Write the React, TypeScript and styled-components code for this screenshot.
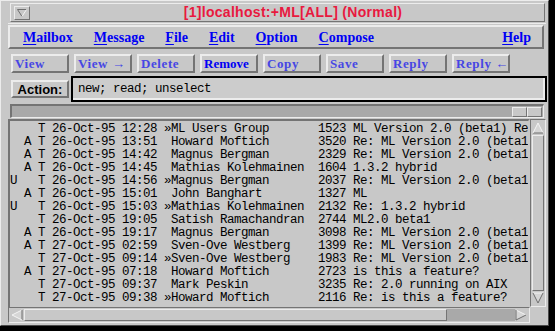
import React from "react";
import styled, { createGlobalStyle, css } from "styled-components";

const C = {
  bg: "#c8c8c8",
  light: "#ececec",
  dark: "#747474",
  trough: "#a9a9a9",
  blue: "#0000f4",
  stipple: "#4646e4",
  red: "#e8193f",
};

const GlobalStyle = createGlobalStyle`
  html, body {
    margin: 0;
    padding: 0;
    background: #000;
  }
`;

const raised = css`
  border-top: 2px solid ${C.light};
  border-left: 2px solid ${C.light};
  border-bottom: 2px solid ${C.dark};
  border-right: 2px solid ${C.dark};
`;

const sunken = css`
  border-top: 1px solid ${C.dark};
  border-left: 1px solid ${C.dark};
  border-bottom: 1px solid ${C.light};
  border-right: 1px solid ${C.light};
`;

const Screen = styled.div`
  width: 555px;
  height: 331px;
  background: #000;
  overflow: hidden;
`;

const Frame = styled.div`
  box-sizing: border-box;
  width: 549px;
  height: 326px;
  background: ${C.bg};
  border-top: 1px solid ${C.light};
  border-left: 1px solid ${C.light};
  border-right: 1px solid #4a4a4a;
  border-bottom: 1px solid #4a4a4a;
  padding: 2px 2px 2px 7px;
  display: flex;
  flex-direction: column;
`;

const TitleBar = styled.div`
  box-sizing: border-box;
  height: 19px;
  margin: 0 1px 0 2px;
  padding-left: 3px;
  display: flex;
  align-items: center;
  border-top: 1px solid ${C.light};
  border-left: 1px solid ${C.light};
  border-bottom: 1px solid ${C.dark};
  border-right: 1px solid ${C.dark};
`;

const WindowMenuButton = styled.div`
  box-sizing: border-box;
  width: 16px;
  height: 14px;
  display: flex;
  align-items: center;
  justify-content: center;
  border-top: 1px solid ${C.light};
  border-left: 1px solid ${C.light};
  border-bottom: 1px solid ${C.dark};
  border-right: 1px solid ${C.dark};
`;

const TitleText = styled.div`
  flex: 1;
  text-align: center;
  padding-left: 12px;
  font-family: "Liberation Sans", Arial, sans-serif;
  font-weight: bold;
  font-size: 14px;
  letter-spacing: 0.3px;
  line-height: 17px;
  color: ${C.red};
  white-space: nowrap;
`;

const Client = styled.div`
  flex: 1;
  min-height: 0;
  margin-top: 1px;
  padding-top: 1px;
  border-top: 1px solid ${C.light};
  display: flex;
  flex-direction: column;
`;

const MenuBar = styled.div`
  box-sizing: border-box;
  height: 24px;
  margin-right: 2px;
  padding: 1px 0 0 13px;
  display: flex;
  align-items: center;
  gap: 21px;
  ${raised}
`;

const MenuItem = styled.span<{ $right?: boolean }>`
  font-family: "Liberation Serif", "Times New Roman", serif;
  font-weight: bold;
  font-size: 14px;
  line-height: 16px;
  color: ${C.blue};
  ${(p) => p.$right && "margin-left: auto; margin-right: 11px;"}
`;

const Mnemonic = styled.span`
  text-decoration: underline;
  text-underline-offset: 2px;
`;

const ToolBar = styled.div`
  margin-top: 5px;
  height: 19px;
  padding-left: 3px;
  display: flex;
  gap: 5px;
`;

const ToolButton = styled.div<{ $off?: boolean }>`
  box-sizing: border-box;
  width: 58px;
  height: 19px;
  padding-left: 2px;
  display: flex;
  align-items: center;
  ${raised}
  font-family: "Liberation Serif", "Times New Roman", serif;
  font-weight: bold;
  font-size: 13px;
  line-height: 15px;
  white-space: nowrap;
  color: ${(p) => (p.$off ? C.stipple : C.blue)};
  letter-spacing: ${(p) => (p.$off ? "0.6px" : "0")};
`;

const ActionRow = styled.div`
  margin-top: 3px;
  height: 26px;
  padding-left: 3px;
  display: flex;
  align-items: center;
`;

const ActionButton = styled.div`
  box-sizing: border-box;
  width: 58px;
  height: 18px;
  display: flex;
  align-items: center;
  justify-content: center;
  ${raised}
  font-family: "Liberation Sans", Arial, sans-serif;
  font-weight: bold;
  font-size: 13px;
  color: #000;
`;

const Field = styled.div`
  box-sizing: border-box;
  flex: 1;
  height: 26px;
  margin: 0 -1px 0 2px;
  padding-left: 5px;
  display: flex;
  align-items: center;
  border: 2px solid #000;
  box-shadow: inset -2px -2px 0 ${C.light};
  background: #cccccc;
`;

const Mono = css`
  font-family: "Liberation Mono", "Courier New", monospace;
  font-size: 12.5px;
  letter-spacing: -0.5px;
  color: #000;
  white-space: pre;
`;

const FieldText = styled.span`
  ${Mono}
`;

const Sash = styled.div`
  box-sizing: border-box;
  height: 14px;
  margin: 2px 2px 0 2px;
  padding-right: 1px;
  display: flex;
  align-items: center;
  justify-content: flex-end;
  background: ${C.trough};
  border-top: 2px solid ${C.dark};
  border-left: 2px solid ${C.dark};
  border-bottom: 1px solid ${C.light};
  border-right: 1px solid ${C.light};
`;

const SashKnob = styled.div`
  box-sizing: border-box;
  width: 15px;
  height: 10px;
  background: ${C.bg};
  border-top: 1px solid ${C.light};
  border-left: 1px solid ${C.light};
  border-bottom: 1px solid ${C.dark};
  border-right: 1px solid ${C.dark};
`;

const ListPane = styled.div`
  flex: 1;
  min-height: 0;
  margin-top: 1px;
  display: grid;
  grid-template-columns: 1fr 16px;
  grid-template-rows: 1fr 16px;
`;

const ListBox = styled.div`
  min-width: 0;
  overflow: hidden;
  padding-top: 2px;
  border-top: 2px solid ${C.dark};
  border-left: 2px solid ${C.dark};
  border-right: 2px solid ${C.bg};
  background: ${C.bg};
`;

const Row = styled.div`
  ${Mono}
  height: 13px;
  line-height: 13px;
`;

const VScroll = styled.div`
  box-sizing: border-box;
  display: flex;
  flex-direction: column;
  align-items: center;
  gap: 1px;
  padding: 2px 1px;
  ${sunken}
`;

const HScroll = styled.div`
  box-sizing: border-box;
  display: flex;
  align-items: center;
  padding: 1px 2px;
  ${sunken}
`;

const Slider = styled.div<{ $vertical?: boolean }>`
  box-sizing: border-box;
  background: ${C.bg};
  border-top: 1px solid ${C.light};
  border-left: 1px solid ${C.light};
  border-bottom: 1px solid ${C.dark};
  border-right: 1px solid ${C.dark};
  ${(p) => (p.$vertical ? "flex: 1; width: 12px;" : "height: 12px; margin-left: 1px;")}
`;

const HTrough = styled.div`
  flex: 1;
  height: 12px;
  background: ${C.trough};
`;

const Corner = styled.div`
  background: ${C.bg};
`;

type Dir = "up" | "down" | "left" | "right";

const Arrow = ({ dir }: { dir: Dir }) => {
  const pts: Record<Dir, [number, number][]> = {
    up: [[6, 1], [11, 11], [1, 11]],
    down: [[1, 1], [11, 1], [6, 11]],
    left: [[1, 6], [11, 1], [11, 11]],
    right: [[1, 1], [11, 6], [1, 11]],
  };
  const p = pts[dir];
  const lightEdges = dir === "down" || dir === "right" ? [0] : [0, 2];
  return (
    <svg width="12" height="12" viewBox="0 0 12 12" style={{ flex: "none" }}>
      <polygon points={p.map((q) => q.join(",")).join(" ")} fill="#d6d6d6" />
      {p.map((a, i) => {
        const b = p[(i + 1) % 3];
        return (
          <line
            key={i}
            x1={a[0]}
            y1={a[1]}
            x2={b[0]}
            y2={b[1]}
            stroke={lightEdges.includes(i) ? "#f4f4f4" : "#6e6e6e"}
            strokeWidth="1"
          />
        );
      })}
    </svg>
  );
};

const MenuGlyph = () => (
  <svg width="10" height="9" viewBox="0 0 10 9">
    <polyline points="0.5,1.5 9.5,1.5" stroke="#6e6e6e" fill="none" />
    <polyline points="0.5,1.5 5,8.5" stroke="#6e6e6e" fill="none" />
    <polyline points="9.5,1.5 5,8.5" stroke="#f4f4f4" fill="none" />
  </svg>
);

type Msg = [string, string, string, string, boolean, string, string, string];

const messages: Msg[] = [
  ["", "", "26-Oct-95", "12:28", true, "ML Users Group", "1523", "ML Version 2.0 (beta1) Re"],
  ["", "A", "26-Oct-95", "13:51", false, "Howard Moftich", "3520", "Re: ML Version 2.0 (beta1"],
  ["", "A", "26-Oct-95", "14:42", false, "Magnus Bergman", "2329", "Re: ML Version 2.0 (beta1"],
  ["", "A", "26-Oct-95", "14:45", false, "Mathias Kolehmainen", "1604", "1.3.2 hybrid"],
  ["U", "", "26-Oct-95", "14:56", true, "Magnus Bergman", "2037", "Re: ML Version 2.0 (beta1"],
  ["", "A", "26-Oct-95", "15:01", false, "John Banghart", "1327", "ML"],
  ["U", "", "26-Oct-95", "15:03", true, "Mathias Kolehmainen", "2132", "Re: 1.3.2 hybrid"],
  ["", "", "26-Oct-95", "19:05", false, "Satish Ramachandran", "2744", "ML2.0 beta1"],
  ["", "A", "26-Oct-95", "19:17", false, "Magnus Bergman", "3098", "Re: ML Version 2.0 (beta1"],
  ["", "A", "27-Oct-95", "02:59", false, "Sven-Ove Westberg", "1399", "Re: ML Version 2.0 (beta1"],
  ["", "", "27-Oct-95", "09:14", true, "Sven-Ove Westberg", "1983", "Re: ML Version 2.0 (beta1"],
  ["", "A", "27-Oct-95", "07:18", false, "Howard Moftich", "2723", "is this a feature?"],
  ["", "", "27-Oct-95", "09:37", false, "Mark Peskin", "3235", "Re: 2.0 running on AIX"],
  ["", "", "27-Oct-95", "09:38", true, "Howard Moftich", "2116", "Re: is this a feature?"],
];

const formatRow = ([u, a, date, time, thread, from, size, subject]: Msg) =>
  `${u || " "} ${a || " "} T ${date} ${time} ${thread ? "»" : " "}${from.padEnd(21)}${size} ${subject}`;

const menus = ["Mailbox", "Message", "File", "Edit", "Option", "Compose"];

const buttons: { label: string; off?: boolean }[] = [
  { label: "View", off: true },
  { label: "View →", off: true },
  { label: "Delete", off: true },
  { label: "Remove" },
  { label: "Copy", off: true },
  { label: "Save", off: true },
  { label: "Reply", off: true },
  { label: "Reply ←", off: true },
];

export default function App() {
  return (
    <Screen>
      <GlobalStyle />
      <Frame>
        <TitleBar>
          <WindowMenuButton>
            <MenuGlyph />
          </WindowMenuButton>
          <TitleText>[1]localhost:+ML[ALL] (Normal)</TitleText>
        </TitleBar>
        <Client>
          <MenuBar>
            {menus.map((m) => (
              <MenuItem key={m}>
                <Mnemonic>{m[0]}</Mnemonic>
                {m.slice(1)}
              </MenuItem>
            ))}
            <MenuItem $right>
              <Mnemonic>H</Mnemonic>elp
            </MenuItem>
          </MenuBar>
          <ToolBar>
            {buttons.map((b) => (
              <ToolButton key={b.label} $off={b.off}>
                {b.label}
              </ToolButton>
            ))}
          </ToolBar>
          <ActionRow>
            <ActionButton>Action:</ActionButton>
            <Field>
              <FieldText>new; read; unselect</FieldText>
            </Field>
          </ActionRow>
          <Sash>
            <SashKnob />
            <SashKnob />
          </Sash>
          <ListPane>
            <ListBox>
              {messages.map((m, i) => (
                <Row key={i}>{formatRow(m)}</Row>
              ))}
            </ListBox>
            <VScroll>
              <Arrow dir="up" />
              <Slider $vertical />
              <Arrow dir="down" />
            </VScroll>
            <HScroll>
              <Arrow dir="left" />
              <Slider style={{ width: "423px" }} />
              <HTrough />
              <Arrow dir="right" />
            </HScroll>
            <Corner />
          </ListPane>
        </Client>
      </Frame>
    </Screen>
  );
}
